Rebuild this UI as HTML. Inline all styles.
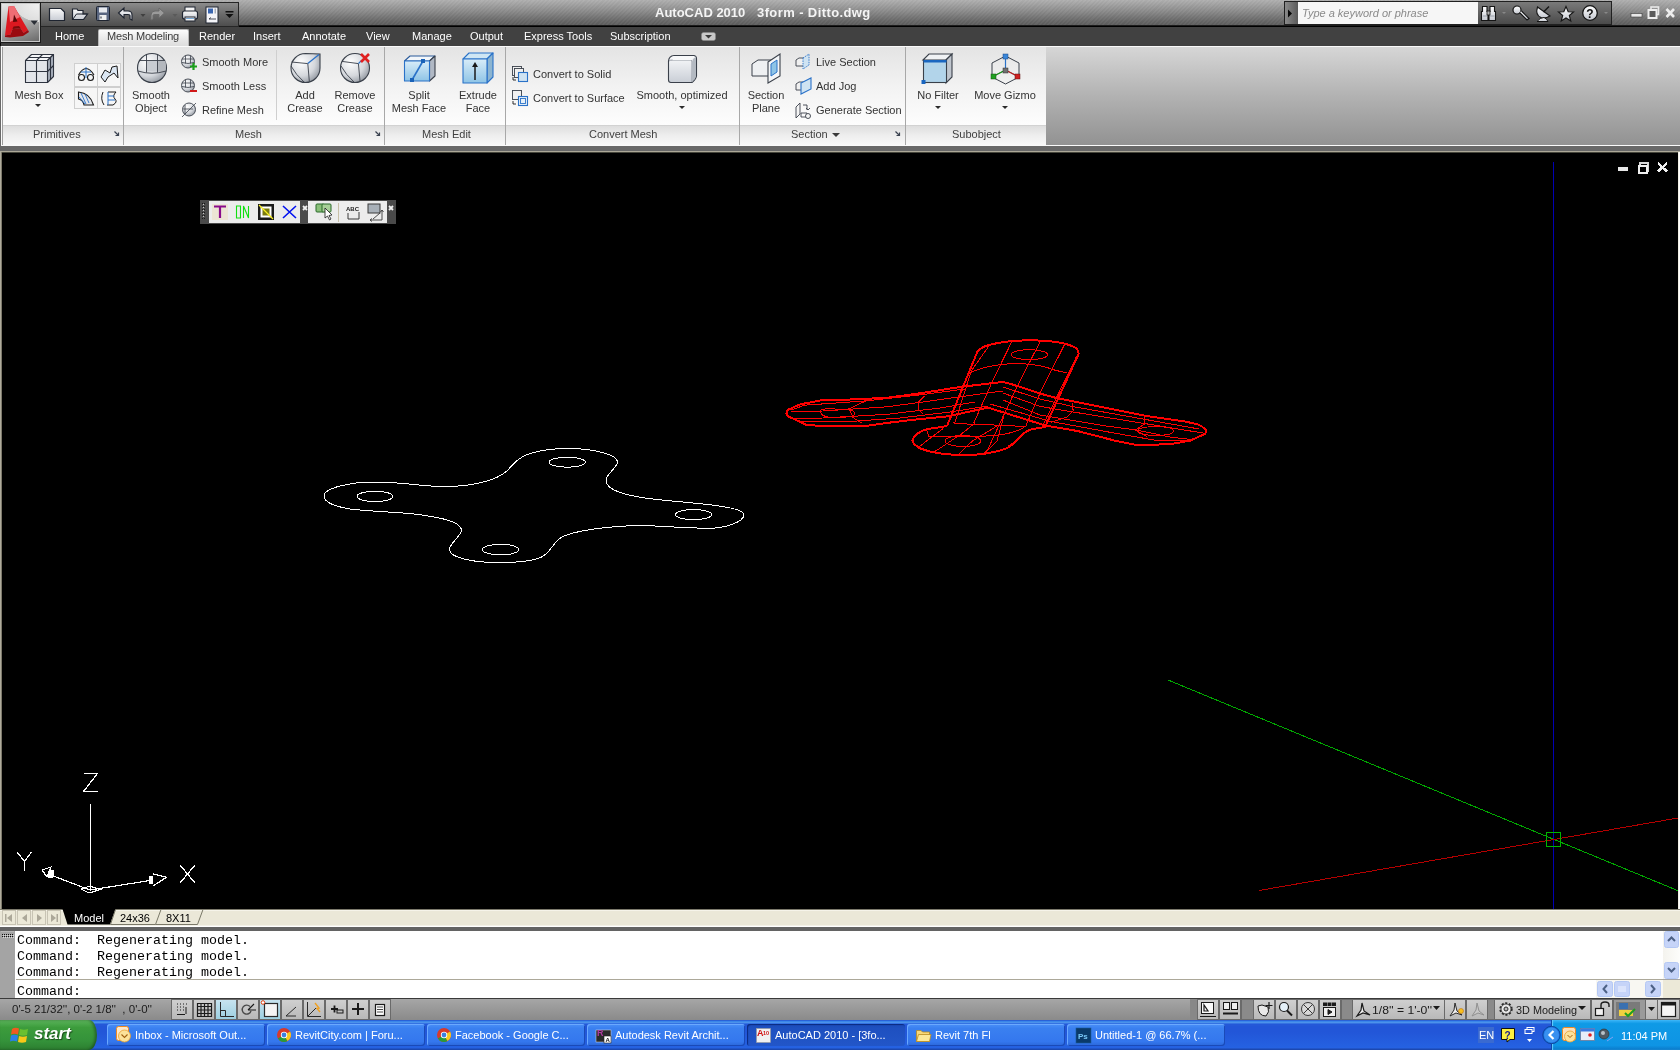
<!DOCTYPE html>
<html><head><meta charset="utf-8">
<style>
*{margin:0;padding:0;box-sizing:border-box}
html,body{width:1680px;height:1050px;overflow:hidden;background:#000;font-family:"Liberation Sans",sans-serif;font-size:11px}
body{will-change:transform}
.a{position:absolute}
.tab{top:30px;color:#fff;font-size:11px;white-space:nowrap}
.sep{top:47px;width:1px;height:98px;background:#a8a8a8}
.isep{width:1px;height:70px;background:#cfcfcf}
.pt{top:128px;color:#404040;font-size:11px;white-space:nowrap}
.lbl{color:#333;font-size:11px;white-space:nowrap;text-align:center;line-height:13px}
.sl{color:#333;font-size:11px;white-space:nowrap}
.cl{left:17px;font-family:"Liberation Mono",monospace;font-size:13.33px;color:#000;white-space:pre}
.tb{top:1024px;width:158px;height:22px;background:linear-gradient(#4a90f8,#3a80f0 20%,#3477ee 80%,#2a66d8);border-radius:3px;color:#fff;font-size:11px;padding:5px 0 0 28px;white-space:nowrap;box-shadow:inset 1px 1px 0 #6aa8ff,inset -1px -1px 0 #1a4ab8}
.tb.act{background:linear-gradient(#1a4ab8,#1e50c0 20%,#2256c8);box-shadow:inset 1px 1px 1px #0a2a80}
</style></head><body>
<!-- TITLE BAR -->
<div class="a" style="left:0;top:0;width:1680px;height:26px;background:linear-gradient(#b0b0b0,#8e8e8e 40%,#686868 80%,#5a5a5a)"></div>
<div class="a" style="left:0;top:0;width:1680px;height:26px;background:repeating-linear-gradient(-45deg,rgba(255,255,255,0.03) 0 1.5px,rgba(0,0,0,0.02) 1.5px 3px)"></div>
<div class="a" style="left:0;top:25px;width:1680px;height:1px;background:#1c1c1c"></div><div class="a" style="left:0;top:26px;width:1680px;height:1px;background:#000"></div>
<div class="a" style="left:655px;top:5px;color:#f4f4f4;font-weight:bold;font-size:13px;white-space:pre">AutoCAD 2010</div><div class="a" style="left:757px;top:5px;color:#f4f4f4;font-weight:bold;font-size:13px;letter-spacing:0.4px;white-space:pre">3form - Ditto.dwg</div>
<!-- QAT -->
<div class="a" style="left:40px;top:2px;width:199px;height:25px;background:linear-gradient(#8c8c8c,#6a6a6a 50%,#4e4e4e);border:1px solid #262626;border-left:none"></div>
<svg class="a" style="left:40px;top:2px" width="200" height="25" viewBox="0 0 200 25">
  <defs><linearGradient id="qg" x1="0" y1="0" x2="0" y2="1"><stop offset="0" stop-color="#fafafa"/><stop offset="1" stop-color="#c8ccd4"/></linearGradient></defs>
  <!-- new -->
  <path d="M9.5,6.5 H21 L24.5,10 V18.5 H9.5 Z" fill="url(#qg)" stroke="#1e2430" stroke-width="1.2"/>
  <!-- open -->
  <path d="M32.5,7 H37 L38,8.5 H43 V12 H47.5 L43.5,17.5 H32.5 Z" fill="url(#qg)" stroke="#1e2430" stroke-width="1.2"/>
  <path d="M33,17 L36.5,12 H47.5" fill="none" stroke="#1e2430" stroke-width="1"/>
  <!-- save -->
  <rect x="56.5" y="4.5" width="13" height="14" rx="1" fill="#5a6680" stroke="#1e2430" stroke-width="1"/>
  <rect x="59" y="5.5" width="8" height="5" fill="#e8eaee"/>
  <rect x="59.5" y="13" width="7" height="5" fill="#f0f0f0"/>
  <rect x="60.5" y="14.5" width="1" height="2" fill="#1e2430"/>
  <!-- undo -->
  <path d="M78.5,11 L84,6 V9 H88 Q92,9 92,13 V18 L90,17 V13.5 Q90,12.5 88,12.5 H84 V16 Z" fill="url(#qg)" stroke="#1e2430" stroke-width="1.1"/>
  <path d="M100.5,12 H105.5 L103,15 Z" fill="#404040"/>
  <!-- redo -->
  <path d="M124.5,11 L119,6 V9 H115 Q111,9 111,13 V18 L113,17 V13.5 Q113,12.5 115,12.5 H119 V16 Z" fill="#9a9a9a" stroke="#6a6a6a" stroke-width="1"/>
  <path d="M132.5,12 H137.5 L135,15 Z" fill="#5a5a5a"/>
  <!-- print -->
  <rect x="145" y="5" width="10" height="5" fill="#f4f4f4" stroke="#1e2430"/>
  <rect x="142.5" y="9" width="15" height="8" rx="2" fill="url(#qg)" stroke="#1e2430" stroke-width="1.2"/>
  <rect x="145" y="15" width="10" height="4" fill="#f4f4f4" stroke="#1e2430"/>
  <rect x="146" y="16" width="8" height="1" fill="#7aaad8"/>
  <!-- publish -->
  <rect x="166" y="5" width="12" height="16" fill="#f4f4f8" stroke="#1e2430" stroke-width="1"/>
  <rect x="168" y="6.5" width="5" height="5" fill="#3a66b0"/>
  <rect x="174.5" y="6.5" width="1.5" height="5" fill="#a8b0bc"/>
  <path d="M169,17 H176 M169,17 L171,15.5" stroke="#1e2430" stroke-width="0.8" fill="none"/>
  <!-- dropdown -->
  <rect x="185.5" y="9" width="8" height="1.5" fill="#101010"/>
  <path d="M185.5,12 H193.5 L189.5,16 Z" fill="#101010"/>
</svg>
<!-- search -->
<div class="a" style="left:1284px;top:1px;width:328px;height:24px;background:linear-gradient(#7a7a7a,#4a4a4a);border:1px solid #202020"></div>
<div class="a" style="left:1285px;top:2px;width:13px;height:22px;background:linear-gradient(90deg,#8a8a8a,#5a5a5a)"></div>
<svg class="a" style="left:1287px;top:9px" width="6" height="9"><path d="M1,0.5 L5,4.5 L1,8.5 Z" fill="#080808"/></svg>
<div class="a" style="left:1298px;top:2px;width:180px;height:22px;background:#f6f6f6"></div>
<div class="a" style="left:1302px;top:7px;color:#8a8a8a;font-style:italic;font-size:11px;white-space:nowrap">Type a keyword or phrase</div>
<svg class="a" style="left:1478px;top:2px" width="134" height="22" viewBox="0 0 134 22">
  <defs><linearGradient id="sg" x1="0" y1="0" x2="0" y2="1"><stop offset="0" stop-color="#ffffff"/><stop offset="1" stop-color="#c4c8d0"/></linearGradient></defs>
  <!-- binoculars -->
  <path d="M4.5,4.5 H9 V9.5 H10 V18.5 H3.5 V9.5 H4.5 Z M12,4.5 H16.5 V9.5 H17.5 V18.5 H11 V9.5 H12 Z" fill="url(#sg)" stroke="#151515" stroke-width="1.1"/>
  <rect x="9" y="9" width="3" height="4" fill="#b0b0b0" stroke="#151515" stroke-width="0.8"/>
  <path d="M5,14 H9 M12,14 H16.5" stroke="#9aa0aa" stroke-width="1"/>
  <path d="M24,10 H28 L26,12 Z" fill="#888"/>
  <!-- key -->
  <circle cx="39" cy="8" r="4" fill="url(#sg)" stroke="#151515" stroke-width="1.2"/>
  <path d="M41.5,10.5 L49,18 L51,16.5 L43.5,9" fill="url(#sg)" stroke="#151515" stroke-width="1.2"/>
  <!-- satellite -->
  <path d="M59.5,5 Q57,13 63,15.5 Q67,17 72,14 Z" fill="url(#sg)" stroke="#151515" stroke-width="1.1"/>
  <path d="M65.5,10 L71,4.5" stroke="#151515" stroke-width="1.4"/>
  <path d="M59,19.5 Q62,15.5 66,15.5 Q69,17 70,19.5 Z" fill="url(#sg)" stroke="#151515" stroke-width="1"/>
  <!-- star -->
  <path d="M88,4.5 L90.2,9.8 L95.5,10 L91.3,13.5 L92.8,19 L88,16 L83.2,19 L84.7,13.5 L80.5,10 L85.8,9.8 Z" fill="url(#sg)" stroke="#151515" stroke-width="1.1"/>
  <!-- help -->
  <circle cx="112" cy="11" r="7.3" fill="url(#sg)" stroke="#151515" stroke-width="1.3"/>
  <text x="112" y="15.5" text-anchor="middle" font-family="Liberation Sans" font-weight="bold" font-size="12" fill="#101010">?</text>
  <path d="M126,10 H130 L128,12 Z" fill="#888"/>
</svg>
<!-- window controls -->
<svg class="a" style="left:1628px;top:4px" width="52" height="18" viewBox="0 0 52 18">
  <rect x="3" y="9.5" width="11" height="3.5" fill="#e8e8e8" stroke="#3a3a3a" stroke-width="0.6"/>
  <rect x="23" y="3" width="7.5" height="7.5" fill="none" stroke="#e8e8e8" stroke-width="1.6"/>
  <rect x="20.5" y="6" width="8" height="8" fill="#5a5a5a" stroke="#eeeeee" stroke-width="2"/>
  <path d="M38.5,5 L46,13 M46,5 L38.5,13" stroke="#eeeeee" stroke-width="2.6"/>
</svg>
<!-- TABS -->
<div class="a" style="left:0;top:27px;width:1680px;height:19px;background:#414141"></div>
<div class="a" style="left:0;top:26px;width:1px;height:20px;background:#0a0a0a"></div>
<div class="a" style="left:98px;top:29px;width:91px;height:18px;background:linear-gradient(#fbfbfb,#e6e6e6 60%,#dcdcdc);border:1px solid #b8b8b8;border-bottom:none;border-radius:2px 2px 0 0"></div>
<div class="a tab" style="left:55px">Home</div>
<div class="a tab" style="left:107px;color:#3a3a3a;letter-spacing:-0.2px">Mesh Modeling</div>
<div class="a tab" style="left:199px">Render</div>
<div class="a tab" style="left:253px">Insert</div>
<div class="a tab" style="left:302px">Annotate</div>
<div class="a tab" style="left:366px">View</div>
<div class="a tab" style="left:412px">Manage</div>
<div class="a tab" style="left:470px">Output</div>
<div class="a tab" style="left:524px">Express Tools</div>
<div class="a tab" style="left:610px">Subscription</div>
<svg class="a" style="left:701px;top:32px" width="15" height="10"><rect x="0.5" y="0.5" width="14" height="8" rx="2" fill="#c8c8c8" stroke="#888" stroke-width="0.5"/><path d="M4,3 H11 L7.5,6.5 Z" fill="#3a3a3a"/></svg>
<!-- app button -->
<div class="a" style="left:0;top:2px;width:41px;height:41px;background:#1a1a1a"></div>
<div class="a" style="left:1px;top:3px;width:39px;height:39px;background:radial-gradient(ellipse 60px 40px at 40px 0px,#f2f2f2 0,#dedede 45%,transparent 46%),linear-gradient(160deg,#e8e8e8,#b0b0b0 50%,#6a6a6a);border:1px solid #c8c8c8"></div>
<svg class="a" style="left:1px;top:3px" width="39" height="39" viewBox="0 0 39 39">
  <path d="M7.5,3.5 L13,3 L27,27 L22.5,30 L19.5,25 L11.5,26 L9.5,31.5 L4,32.5 Z" fill="#dc1820"/>
  <path d="M7.5,3.5 L13,3 L19,14 L9,19 Z" fill="#f27c84" opacity="0.85"/>
  <path d="M13,11.5 L16.5,18.5 L12,19 Z" fill="#5a0808"/>
  <path d="M4,32.5 L9.5,31.5 L11.5,26 L19.5,25 L22.5,30 L27,27 L28,29 L22,33 L9,34.5 L4,34 Z" fill="#9a0a10"/>
  <path d="M11.5,26 L19.5,25 L18,23 L12.5,23.5 Z" fill="#7a0a0a"/>
  <polygon points="29.5,17.5 37,17.5 33.3,22" fill="#2a2e36"/>
</svg>
<!-- RIBBON -->
<div class="a" style="left:0;top:46px;width:1680px;height:100px;background:linear-gradient(#d6d6d6,#b2b2b2 50%,#929292);border-top:1px solid #fafafa;border-bottom:1px solid #fafafa"></div>
<div class="a" style="left:0;top:46px;width:1px;height:100px;background:#6a6a6a"></div>
<div class="a" style="left:1px;top:46px;width:1px;height:100px;background:#fafafa"></div>
<div class="a" style="left:2px;top:47px;width:1044px;height:78px;background:linear-gradient(#e4e4e4,#f2f2f2 50%,#fdfdfd)"></div>
<div class="a" style="left:2px;top:125px;width:1044px;height:20px;background:linear-gradient(#dedede,#eeeeee 50%,#f8f8f8);border-top:1px solid #d2d2d2"></div>
<div class="a" style="left:2px;top:47px;width:1px;height:98px;background:#9c9c9c"></div>
<div class="a sep" style="left:123px"></div>
<div class="a sep" style="left:384px"></div>
<div class="a sep" style="left:505px"></div>
<div class="a sep" style="left:739px"></div>
<div class="a sep" style="left:905px"></div>
<div class="a isep" style="left:276px;top:50px"></div>
<div class="a pt" style="left:33px">Primitives</div>
<div class="a pt" style="left:235px">Mesh</div>
<div class="a pt" style="left:422px">Mesh Edit</div>
<div class="a pt" style="left:589px">Convert Mesh</div>
<div class="a pt" style="left:791px">Section</div>
<div class="a pt" style="left:952px">Subobject</div>
<svg class="a" style="left:0;top:125px" width="1046" height="20" viewBox="0 0 1046 20">
  <g stroke="#3a4250" stroke-width="1.2" fill="none">
   <path d="M114.5,6.5 L118.5,10.5 M118.5,7.5 V10.5 H115.5"/>
   <path d="M375.5,6.5 L379.5,10.5 M379.5,7.5 V10.5 H376.5"/>
   <path d="M895.5,6.5 L899.5,10.5 M899.5,7.5 V10.5 H896.5"/>
  </g>
  <path d="M832,8 H840 L836,12 Z" fill="#3a3a3a"/>
</svg>
<!-- labels -->
<div class="a lbl" style="left:10px;top:89px;width:58px">Mesh Box</div>
<div class="a lbl" style="left:125px;top:89px;width:52px">Smooth<br>Object</div>
<div class="a sl" style="left:202px;top:56px">Smooth More</div>
<div class="a sl" style="left:202px;top:80px">Smooth Less</div>
<div class="a sl" style="left:202px;top:104px">Refine Mesh</div>
<div class="a lbl" style="left:280px;top:89px;width:50px">Add<br>Crease</div>
<div class="a lbl" style="left:327px;top:89px;width:56px">Remove<br>Crease</div>
<div class="a lbl" style="left:386px;top:89px;width:66px">Split<br>Mesh Face</div>
<div class="a lbl" style="left:450px;top:89px;width:56px">Extrude<br>Face</div>
<div class="a sl" style="left:533px;top:68px">Convert to Solid</div>
<div class="a sl" style="left:533px;top:92px">Convert to Surface</div>
<div class="a lbl" style="left:628px;top:89px;width:108px">Smooth, optimized</div>
<div class="a lbl" style="left:740px;top:89px;width:52px">Section<br>Plane</div>
<div class="a sl" style="left:816px;top:56px">Live Section</div>
<div class="a sl" style="left:816px;top:80px">Add Jog</div>
<div class="a sl" style="left:816px;top:104px">Generate Section</div>
<div class="a lbl" style="left:908px;top:89px;width:60px">No Filter</div>
<div class="a lbl" style="left:968px;top:89px;width:74px">Move Gizmo</div>
<!-- icons -->
<svg class="a" style="left:0;top:46px" width="1046" height="80" viewBox="0 46 1046 80">
  <defs>
    <linearGradient id="gw" x1="0" y1="0" x2="0" y2="1"><stop offset="0" stop-color="#fafbfc"/><stop offset="1" stop-color="#c9ced6"/></linearGradient>
    <linearGradient id="gs" x1="0" y1="0" x2="1" y2="1"><stop offset="0" stop-color="#ffffff"/><stop offset="0.6" stop-color="#d8dbe0"/><stop offset="1" stop-color="#8e949e"/></linearGradient>
    <linearGradient id="gb" x1="0" y1="0" x2="0" y2="1"><stop offset="0" stop-color="#d8ecf8"/><stop offset="1" stop-color="#8ec4e6"/></linearGradient>
    <radialGradient id="rs" cx="0.35" cy="0.3" r="0.8"><stop offset="0" stop-color="#ffffff"/><stop offset="0.6" stop-color="#d4d7dc"/><stop offset="1" stop-color="#8a9099"/></radialGradient>
  </defs>
  <!-- mesh box -->
  <g stroke="#2e3440" stroke-width="1.1" stroke-linejoin="round">
    <path d="M25.5,60.5 L31.5,54.5 H53.5 L47.5,60.5 Z" fill="#f4f5f7"/>
    <path d="M47.5,60.5 L53.5,54.5 V76.5 L47.5,82.5 Z" fill="#a8b0bc"/>
    <rect x="25.5" y="60.5" width="22" height="22" fill="#e2e5ea"/>
    <path d="M36.5,60.5 V82.5 M25.5,71.5 H47.5 M50.5,57.5 V79.5 M47.5,71.5 L53.5,65.5 M42.5,54.5 L36.5,60.5 M28.5,57.5 H50.5" fill="none"/>
  </g>
  <path d="M35,104 H41 L38,107 Z" fill="#2a2a2a"/>
  <!-- small grid -->
  <g fill="#f6f6f6" stroke="#cfcfcf"><rect x="74.5" y="63.5" width="23" height="23"/><rect x="97.5" y="63.5" width="23" height="23"/><rect x="74.5" y="87.5" width="23" height="21"/><rect x="97.5" y="87.5" width="23" height="21"/></g>
  <g stroke="#1a1a1a" stroke-width="1.1" fill="none">
    <path d="M78.5,75 Q86,62 94,75"/><circle cx="81.5" cy="77.5" r="3"/><circle cx="90.5" cy="77.5" r="3"/>
  </g>
  <path d="M86,67 V78 M81,72 H91" stroke="#2a72c8" stroke-width="1"/>
  <path d="M101,77 L105,70 L110,73 L112,67 L117,66 L118,78 L114,73 L108,77 L105,82 Z" fill="#dbe6f2" stroke="#1a1a1a" stroke-width="1"/>
  <path d="M78.5,92 Q90,93 93.5,105 H84 Q83,100 78.5,99 Z" fill="#e4e6ea" stroke="#1a1a1a" stroke-width="1.1"/>
  <path d="M81,93 L86,104 M85,94 L89,103 M79,97 L85,104" stroke="#2a72c8" stroke-width="0.9"/>
  <path d="M103,92 Q100,99 104,105 M108,92 H116 Q112,96 115,99 Q118,102 113,105 H107" fill="none" stroke="#1a1a1a" stroke-width="1"/>
  <path d="M108,92 V105 M108,96 H114 M108,100 H115" stroke="#2a72c8" stroke-width="1"/>
  <!-- smooth object sphere -->
  <circle cx="152" cy="68" r="14.5" fill="url(#rs)" stroke="#3a404a" stroke-width="1.1"/>
  <rect x="146.5" y="60.5" width="11" height="11" fill="#c8ccd2"/>
  <path d="M157.5,60.5 H165.5 Q166.5,66 165.5,71 Q161,72 157.5,71.5 Z" fill="#b4b8be"/>
  <path d="M138,71 Q152,75.5 166,71 M139,60.5 H165 M146.5,54.5 V72.5 M157.5,54.5 V72.5" fill="none" stroke="#3a404a" stroke-width="0.9"/>
  <!-- smooth more/less/refine -->
  <g transform="translate(181,54)">
    <circle cx="7" cy="7.5" r="6.5" fill="url(#rs)" stroke="#3a404a" stroke-width="0.9"/>
    <path d="M1,5 H13 M1,8.5 Q7,10.5 13,8.5 M4.5,1.5 V9.5 M9.5,1.5 V9.5" stroke="#3a404a" stroke-width="0.8" fill="none"/>
    <path d="M12.5,9 V16 M9,12.5 H16" stroke="#1aa01a" stroke-width="2.2"/>
  </g>
  <g transform="translate(181,78)">
    <circle cx="7" cy="7.5" r="6.5" fill="url(#rs)" stroke="#3a404a" stroke-width="0.9"/>
    <path d="M1,5 H13 M1,8.5 Q7,10.5 13,8.5 M4.5,1.5 V9.5 M9.5,1.5 V9.5" stroke="#3a404a" stroke-width="0.8" fill="none"/>
    <path d="M9,13 H16" stroke="#d01818" stroke-width="2"/>
  </g>
  <g transform="translate(181,102)">
    <circle cx="8" cy="7.5" r="6.5" fill="url(#rs)" stroke="#3a404a" stroke-width="0.9"/>
    <path d="M1,15 L15,1 M4,3 V12 M2,7 H12" stroke="#3a404a" stroke-width="0.8" fill="none"/>
  </g>
  <!-- add crease -->
  <path d="M320,54 V68 A14.5,14.5 0 1 1 305.5,53.5 Z" fill="url(#rs)" stroke="#3a404a" stroke-width="1.1"/>
  <path d="M291.5,62 L307.8,63.6 L309.3,81 M291,66 Q296,75 304,82" fill="none" stroke="#3a404a" stroke-width="0.9"/>
  <path d="M307.8,63.6 L319,54.5" stroke="#2a72c8" stroke-width="1.3"/>
  <!-- remove crease -->
  <circle cx="355" cy="68" r="14.5" fill="url(#rs)" stroke="#3a404a" stroke-width="1.1"/>
  <path d="M342,61.4 L358.4,63.6 L360,81 M341,66 Q346,75 354,82" fill="none" stroke="#3a404a" stroke-width="0.9"/>
  <path d="M358.4,63.6 L361,61" stroke="#2a72c8" stroke-width="1.2"/>
  <path d="M361,54 L369,62 M369,54 L361,62" stroke="#e02020" stroke-width="2.6"/>
  <!-- split mesh face -->
  <g stroke="#2a5a9a" stroke-width="1.1" stroke-linejoin="round">
    <path d="M404.5,61 L410,56 H435 L429.5,61 Z" fill="#f2f6fa"/>
    <path d="M429.5,61 L435,56 V76 L429.5,81 Z" fill="#b0b8c4" stroke="#3a404a"/>
    <rect x="404.5" y="61" width="25" height="20" fill="url(#gb)" stroke="#2a72c8"/>
  </g>
  <path d="M412,80 L423,61" stroke="#2a72c8" stroke-width="1.6"/>
  <rect x="410" y="78" width="4" height="4" fill="#1a62b8"/><rect x="421" y="59" width="4" height="4" fill="#1a62b8"/>
  <!-- extrude face -->
  <g stroke-linejoin="round">
    <path d="M463,59 L469,53 H493 L487,59 Z" fill="#cfe6f4" stroke="#2a72c8" stroke-width="1.1"/>
    <path d="M487,59 L493,53 V77 L487,83 Z" fill="#8cb4d0" stroke="#2a72c8" stroke-width="1.1"/>
    <rect x="463" y="59" width="24" height="24" fill="url(#gb)" stroke="#2a72c8" stroke-width="1.1"/>
  </g>
  <path d="M475,80 V66" stroke="#1a1a1a" stroke-width="1.5"/><path d="M472,67 L475,62 L478,67 Z" fill="#1a1a1a"/>
  <!-- convert icons -->
  <g transform="translate(512,66)">
    <rect x="0.5" y="0.5" width="9" height="9" fill="#f0f0f0" stroke="#3a404a" stroke-width="0.9"/>
    <rect x="2.5" y="2.5" width="9" height="9" fill="#f0f0f0" stroke="#3a404a" stroke-width="0.9"/>
    <rect x="6.5" y="6.5" width="9" height="9" fill="#cfe3f2" stroke="#2a72c8" stroke-width="1.1"/>
    <path d="M1,11 V14 H4" fill="none" stroke="#1a1a1a" stroke-width="0.9"/>
  </g>
  <g transform="translate(512,90)">
    <rect x="0.5" y="0.5" width="9" height="9" fill="#f0f0f0" stroke="#3a404a" stroke-width="0.9"/>
    <rect x="6.5" y="6.5" width="9" height="9" fill="#e6f0f8" stroke="#2a72c8" stroke-width="1.1"/>
    <rect x="8.5" y="8.5" width="5" height="5" fill="none" stroke="#2a72c8" stroke-width="0.9"/>
    <path d="M1,11 V14 H4" fill="none" stroke="#1a1a1a" stroke-width="0.9"/>
  </g>
  <!-- smooth optimized cube -->
  <path d="M668.5,61 Q669,56 674,55.5 H694 Q696.5,56 696.5,58.5 V76 Q696,79.5 692,82.5 H671 Q668.5,82.5 668.5,80 Z" fill="url(#gw)" stroke="#3a404a" stroke-width="1.1"/>
  <path d="M669,61 Q670,60 673,60 H691 Q692,60.5 692,62 V82" fill="none" stroke="#8a909a" stroke-width="0.9"/>
  <path d="M692,62 Q693,58 696,56.5 V76 Q695.5,79.5 692,82 Z" fill="#b4bac2"/>
  <path d="M673,60 Q670,57 674,56 H694 Q692,59 691,60 Z" fill="#f8f9fa"/>
  <path d="M679,106 H685 L682,109 Z" fill="#2a2a2a"/>
  <!-- section plane -->
  <path d="M752,64 L758,60 H774 V76 H752 Z" fill="#eef0f2" stroke="#3a404a" stroke-width="1"/>
  <path d="M768,62 L780,54 V76 L768,83 Z" fill="#f4f6f8" stroke="#3a404a" stroke-width="1.1"/>
  <path d="M771,64 L777,60 V72 L771,76 Z" fill="#8ec4e6" stroke="#2a72c8" stroke-width="1"/>
  <!-- live section / add jog / generate -->
  <g transform="translate(795,54)" stroke-width="0.9">
    <path d="M1,6 L4,4 H10 V12 H1 Z" fill="#f0f0f0" stroke="#3a404a"/>
    <path d="M8,4 L14,0 V11 L8,15 Z" fill="#cfe3f2" stroke="#2a72c8" stroke-dasharray="1.5,1"/>
  </g>
  <g transform="translate(795,78)" stroke-width="0.9">
    <path d="M1,6 L4,4 H10 V12 H1 Z" fill="#f0f0f0" stroke="#3a404a"/>
    <path d="M6,5 L10,3 L16,0 V11 L10,14 L6,16 Z" fill="#cfe3f2" stroke="#2a72c8" stroke-width="1.1"/>
  </g>
  <g transform="translate(795,102)" stroke-width="0.9" fill="none" stroke="#3a404a">
    <path d="M1,5 L5,1 V12 L1,16 Z" fill="#f6f6f6"/>
    <path d="M6,11 H12 V15 H6 Z M8,3 H12 V8" />
    <circle cx="13" cy="14" r="2.5" fill="#f6f6f6"/>
    <path d="M11,6 L13,8 L15,6" />
  </g>
  <!-- no filter -->
  <path d="M923,60 L929,54 H952 L946,60 Z" fill="#f0f2f4" stroke="#3a404a" stroke-width="1.1"/>
  <path d="M946,60 L952,54 V77 L946,83 Z" fill="#c0c6ce" stroke="#3a404a" stroke-width="1.1"/>
  <rect x="923.5" y="60.5" width="23" height="22" fill="#b2d4ea" stroke="#3a404a" stroke-width="1.1"/>
  <rect x="923.5" y="60" width="23" height="2.5" fill="#1a66c0"/>
  <rect x="921.5" y="80" width="4" height="4" fill="#1a66c0"/>
  <path d="M935,106 H941 L938,109 Z" fill="#2a2a2a"/>
  <!-- move gizmo -->
  <path d="M1005.5,56 L1019,63 V77 L1005.5,84 L992,77 V63 Z" fill="none" stroke="#3a404a" stroke-width="1"/>
  <path d="M1005.5,57 V70 M1005.5,70 L994,76 M1005.5,70 L1017,76" fill="none" stroke="#3a404a" stroke-width="0.9"/>
  <path d="M1005.5,70 L994,76" stroke="#1a9a1a" stroke-width="1.2"/>
  <path d="M1005.5,70 L1017,76" stroke="#c02020" stroke-width="1.2"/>
  <path d="M1005.5,57 V70" stroke="#2a72c8" stroke-width="1.2"/>
  <rect x="1003" y="54" width="5" height="5" fill="#3a86d8" stroke="#1a4a88" stroke-width="0.5"/>
  <rect x="1003" y="68" width="5" height="5" fill="#707070" stroke="#303030" stroke-width="0.5"/>
  <rect x="991" y="74" width="5" height="5" fill="#20a020" stroke="#105010" stroke-width="0.5"/>
  <rect x="1015" y="74" width="5" height="5" fill="#d02020" stroke="#601010" stroke-width="0.5"/>
  <path d="M1002,106 H1008 L1005,109 Z" fill="#2a2a2a"/>
</svg>
<!-- strip below ribbon -->
<div class="a" style="left:0;top:146px;width:1680px;height:5px;background:#686868"></div>
<div class="a" style="left:0;top:151px;width:1680px;height:1px;background:#aca898"></div>
<div class="a" style="left:0;top:152px;width:1680px;height:1px;background:#46463c"></div>
<!-- VIEWPORT -->
<div class="a" style="left:2px;top:153px;width:1676px;height:756px;background:#000"></div>
<svg class="a" style="left:0;top:152px" width="1680" height="757" viewBox="0 152 1680 757" shape-rendering="crispEdges">
  <!-- axes -->
  <line x1="1553.5" y1="162" x2="1553.5" y2="909" stroke="#0000b4" stroke-width="1"/>
  <line x1="1168" y1="680" x2="1680" y2="891.5" stroke="#00a800" stroke-width="1"/>
  <line x1="1259" y1="890.5" x2="1678" y2="818" stroke="#b40000" stroke-width="1"/>
  <rect x="1546.5" y="832.5" width="14" height="14" fill="none" stroke="#00b400" stroke-width="1"/>
  <!-- viewport controls -->
  <rect x="1618" y="167" width="10" height="4" fill="#e8e8e8"/>
  <rect x="1640" y="163" width="8" height="8" fill="none" stroke="#d8d8d8" stroke-width="1.5"/>
  <rect x="1638.5" y="165.5" width="8" height="7" fill="#000" stroke="#f0f0f0" stroke-width="2"/>
  <path d="M1658,163 L1667,171.5 M1667,163 L1658,171.5" stroke="#f0f0f0" stroke-width="2.4"/>
  <!-- white shape -->
  <g fill="none" stroke="#ffffff" stroke-width="1">
    <path d="M324,496 C324,488 350,482 375,482 C400,482 425,486.5 442,486.5 C470,487 497,481 508,470 C514,463 519,457 530,453.5 C543,449.5 556,448.5 568,448.5 C595,448.5 617.5,455 617.5,462 C617.5,467 607,474 606.3,479 C604,490 625,496 657,499.5 C690,503 744,506 744,514.6 C744,522 725,528.3 709,528.3 C680,528 660,525.6 640.5,525.6 C605,526 574,531 562,537 C552,543 551,553 540,557.8 C530,561.5 515,562.6 499,562.6 C470,562.6 449.5,557 449.5,549.6 C449.5,543 461.4,536 461.4,530.4 C461.4,520 430,516 414,514 C395,512 365,511 350,509 C332,506 324,502 324,496 Z"/>
    <ellipse cx="375" cy="496.4" rx="18" ry="5.2"/>
    <ellipse cx="500.5" cy="549.6" rx="18.2" ry="5.3"/>
    <ellipse cx="567.2" cy="462.2" rx="18.2" ry="5"/>
    <ellipse cx="693.6" cy="514.6" rx="18.2" ry="5"/>
  </g>
  <!-- red wireframe -->
  <g fill="none" stroke="#ff0000" stroke-width="1" stroke-linejoin="round">
    <!-- left arm -->
    <path d="M786.4,413.2 C787,410 789,408.5 790.7,408.9 C795,406 798,405 801.4,404.1 L820.7,400.4 L857.2,399.3 L887.2,397.7 L919.3,393.4 L960,387 L1002,382" stroke-width="2"/>
    <path d="M786.4,413.2 C787,416 789,417 790.7,417.5 L806.8,425 L822.9,426 L865.7,426 L887.2,422.9 L914,419.7 L947.2,416.4" stroke-width="2"/>
    <path d="M790.7,412 L822.9,411 L887,406.8 L930,401 L980,394 L1003,391"/>
    <path d="M791,410 L804.6,405.2 L865.7,400.9 L919.3,395 L965,389"/>
    <path d="M792,419 L822.9,418 L887.2,414.3 L940,408 L975,402"/>
    <path d="M800,422 L850,421.5 L900,418 L950,412 L988,406"/>
    <path d="M821,413 C818,409 825,408.5 835,409 C845,409 855,410 855,413.5 C855,417 845,417.5 835,417.5 C825,417.5 822,416 821,413 Z"/>
    <path d="M848.6,409 L865.7,401 M852.9,417.5 L861.4,422.9 M848.6,409 C851,412 852,415 852.9,417.5"/>
    <path d="M924.7,396 L918.2,402.5 L918.2,409 L923.6,414.3"/>
    <!-- center bar section -->
    <path d="M1002,382 C1010,383 1020,387 1040,393.6 L1056,397.9 L1104.3,407.5 L1147.1,416.1 L1184.6,421.4 L1198.6,424.6 C1203,427 1206,429 1206,431.1 C1206,433 1205,434 1204,434.3 L1190,440.7 L1171.8,443.9 L1138.6,445.5 L1115,440.7 L1077.5,431 L1046,425.7" stroke-width="2"/>
    <path d="M947.2,416.4 L988,407.6 L1046,425.7" stroke-width="2"/>
    <path d="M1003,387 L1040,399 L1072,406.4 L1198.6,428.9"/>
    <path d="M1003,393 L1040,406.4 L1072,411.8 L1145,423.6 L1204,433.2"/>
    <path d="M1003,400 L1040,415 L1104,425.7 L1136.4,430 L1170,437 L1195,440"/>
    <path d="M990,404 L1050.7,421.4 L1115,433.2 L1157.9,440.7 L1190,440"/>
    <path d="M1138,431 C1138,428 1145,426.7 1155.7,426.7 C1166,426.7 1173.4,428 1173.4,431 C1173.4,434 1166,435.3 1155.7,435.3 C1145,435.3 1138,434 1138,431 Z"/>
    <path d="M1144,417.1 L1145,423.6 L1135.4,430 L1147,436.4"/>
    <path d="M1072,403.2 L1073.2,410.7 L1066.8,417.1 L1050.7,422.5"/>
    <!-- fin -->
    <path d="M947,426 L977.4,351.7 C980,348 985,346 989.3,345 C1000,342 1010,340.4 1030,340.4 C1050,340.4 1065,343 1072.6,346.3 C1077,348 1079,350 1078.6,354 L1045.2,426.7" stroke-width="2"/>
    <path d="M988.7,346.3 L971.4,370.7 L954.8,423"/>
    <path d="M1076,357.6 L1042.9,425.5"/>
    <path d="M970.2,373 C975,370 990,365 1007,364 C1020,363 1040,364 1052.4,369.5 L1066.7,373"/>
    <path d="M1011.9,341.5 L992.9,380.2 L973.8,423"/>
    <path d="M1040.5,341 L1017.9,385 L1000,423 L985.7,454"/>
    <path d="M1064.3,345 L1040.5,392 L1026,425.5"/>
    <ellipse cx="1029.3" cy="354.7" rx="18.3" ry="5"/>
    <!-- bottom lobe -->
    <path d="M947,426 C940,427.5 932,428 925.7,429.5 C920,431 913,436 912.4,441 C915,447 925,451 935,452.5 C945,454.5 955,455 965,455 C980,455 990,454 1005,449 C1012,446 1016,442 1020,437 C1025,431 1030,429 1040,428 L1046,426.5" stroke-width="2"/>
    <path d="M1008,446 C1014,443 1018,439 1023,434 C1028,430 1034,428 1046,427.5"/>
    <path d="M928,436 C940,437 960,436.2 981,436.2 C995,436.2 1010,435 1024,427.6"/>
    <path d="M953,422.9 C965,424 975,424.8 985.7,424.8 C1000,425 1015,426 1025.7,426.7"/>
    <path d="M926.7,430 L928.6,436.2 M918,447.6 L942.9,428.6 M934.3,451.9 L961,434.3 L975.2,422.9 M958,454.8 L972.4,441 L999,424.8 M983.8,453.8 L997,441 L1004.8,412.4"/>
    <ellipse cx="962.9" cy="441" rx="18" ry="5.5"/>
  </g>
  <!-- UCS icon -->
  <g fill="none" stroke="#ffffff" stroke-width="1.2">
    <path d="M83.5,773.5 H97.5 L83.5,791.5 H97.5"/>
    <line x1="90.5" y1="804" x2="90.5" y2="890"/>
    <path d="M17,852 L24.5,861.5 L31.5,852 M24.5,861.5 V870.5"/>
    <path d="M180,865 L195,883 M195,865 L180,883"/>
    <path d="M90,890 L52,875.5"/>
    <path d="M90,890 L150,880.5"/>
    <path d="M42,870 L51,867 L47,877 Z"/>
    <path d="M153,874 L166.5,877.3 L153,886"/>
    <path d="M81,889 L90,886 L100,889.5 L89,893 Z"/>
  </g>
  <rect x="48" y="870" width="6" height="8" rx="2" fill="#fff"/>
  <rect x="149" y="876" width="4" height="8" fill="#fff"/>
</svg>
<!-- floating toolbar -->
<div class="a" style="left:200px;top:200px;width:196px;height:24px;background:#4a4a4a"></div>
<div class="a" style="left:209px;top:201px;width:91px;height:22px;background:#ececec"></div>
<div class="a" style="left:308px;top:201px;width:79px;height:22px;background:#ececec"></div>
<svg class="a" style="left:200px;top:200px" width="196" height="24" viewBox="200 200 196 24">
  <g fill="#1a1a1a"><rect x="202" y="203" width="1" height="1"/><rect x="204" y="203" width="1" height="1"/><rect x="202" y="206" width="1" height="1"/><rect x="204" y="206" width="1" height="1"/><rect x="202" y="209" width="1" height="1"/><rect x="204" y="209" width="1" height="1"/><rect x="202" y="212" width="1" height="1"/><rect x="204" y="212" width="1" height="1"/><rect x="202" y="215" width="1" height="1"/><rect x="204" y="215" width="1" height="1"/><rect x="202" y="218" width="1" height="1"/><rect x="204" y="218" width="1" height="1"/></g>
  <g fill="#c8c8c8"><rect x="203" y="204" width="1" height="1"/><rect x="203" y="207" width="1" height="1"/><rect x="203" y="210" width="1" height="1"/><rect x="203" y="213" width="1" height="1"/><rect x="203" y="216" width="1" height="1"/></g>
  <rect x="212" y="204" width="16" height="16" fill="#ece4d4"/>
  <path d="M214,206.5 H226 M220,206.5 V218" stroke="#8a0a8a" stroke-width="2.2"/>
  <path d="M236.5,206 H240.5 V218 H236.5 Z M243.5,218 V206 L248.5,218 V206" fill="none" stroke="#10e010" stroke-width="1.1"/>
  <rect x="258" y="204" width="16" height="16" fill="#1a1a1a"/>
  <rect x="260.5" y="206.5" width="11" height="11" fill="#fff"/>
  <rect x="262.5" y="208.5" width="7" height="7" fill="#7a7a10"/>
  <path d="M259,205 L273,219" stroke="#f8f020" stroke-width="1.2"/>
  <path d="M283,206 L296,218 M296,206 L283,218" stroke="#0010f0" stroke-width="1.6"/>
  <path d="M303,206 L307,210 M307,206 L303,210" stroke="#f0f0f0" stroke-width="1.8"/>
  <path d="M389,206 L393,210 M393,206 L389,210" stroke="#f0f0f0" stroke-width="1.8"/>
  <rect x="316" y="204" width="8" height="8" rx="1" fill="#8ac07a" stroke="#2a6a2a" stroke-width="1"/>
  <rect x="322" y="204" width="9" height="8" rx="1" fill="#a8d098" stroke="#2a6a2a" stroke-width="1"/>
  <path d="M325,208 V218 L327.5,216 L329.5,220 L331,219 L329,215.5 L332,215 Z" fill="#fff" stroke="#1a1a1a" stroke-width="0.8"/>
  <line x1="338.5" y1="203" x2="338.5" y2="222" stroke="#c8c0a8"/>
  <text x="346" y="211" font-family="Liberation Sans" font-weight="bold" font-size="6" fill="#1a1a1a">ABC</text>
  <path d="M348,213 V219 H359 V212" fill="none" stroke="#3a3a3a" stroke-width="1"/>
  <rect x="368" y="204" width="12" height="9" fill="#a8b0b8" stroke="#3a3a3a" stroke-width="1"/>
  <path d="M382,210 V220 H370 M382,210 L380.5,212 M382,210 L383.5,212 M370,220 L372,218.5 M370,220 L372,221.5 M373,219 L380,213" fill="none" stroke="#3a3a3a" stroke-width="0.9"/>
</svg>
<!-- LAYOUT TABS -->
<div class="a" style="left:0;top:909px;width:1680px;height:18px;background:#ebe8d8"></div>
<div class="a" style="left:0;top:909px;width:1680px;height:1px;background:#7c7a6c"></div>
<div class="a" style="left:0;top:910px;width:1680px;height:1px;background:#f6f4ea"></div>
<div class="a" style="left:0;top:925px;width:1680px;height:1px;background:#f4f2e8"></div>
<div class="a" style="left:0;top:926px;width:1680px;height:1px;background:#ffffff"></div>
<div class="a" style="left:0;top:152px;width:1px;height:757px;background:#b0ac9c"></div>
<div class="a" style="left:1px;top:152px;width:1px;height:757px;background:#7e7a6c"></div>
<div class="a" style="left:1678px;top:152px;width:1px;height:757px;background:#f2f0e6"></div>
<div class="a" style="left:1679px;top:152px;width:1px;height:757px;background:#ffffff"></div>
<svg class="a" style="left:0;top:909px" width="220" height="17" viewBox="0 0 220 17">
  <g fill="#ece9d8" stroke="#c8c4b4" stroke-width="1">
    <rect x="2.5" y="1.5" width="13" height="14"/><rect x="17.5" y="1.5" width="13" height="14"/><rect x="32.5" y="1.5" width="13" height="14"/><rect x="47.5" y="1.5" width="13" height="14"/>
  </g>
  <g fill="#aca899">
    <rect x="5" y="5" width="1.5" height="8"/><path d="M12,5 V13 L7,9 Z"/>
    <path d="M27,5 V13 L22,9 Z"/>
    <path d="M37,5 V13 L42,9 Z"/>
    <path d="M51,5 V13 L56,9 Z"/><rect x="56.5" y="5" width="1.5" height="8"/>
  </g>
  <path d="M62.5,0 H115.5 L110,15.5 H67.5 Z" fill="#000"/>
  <path d="M115.5,0.5 L110.5,15.5 H155.5 L161,0.5" fill="none" stroke="#7a7868" stroke-width="1"/>
  <path d="M155.5,15.5 H197.5 L203,0.5" fill="none" stroke="#7a7868" stroke-width="1"/>
  <text x="74" y="12.5" font-family="Liberation Sans" font-size="11" fill="#fff">Model</text>
  <text x="120" y="12.5" font-family="Liberation Sans" font-size="11" fill="#000">24x36</text>
  <text x="166" y="12.5" font-family="Liberation Sans" font-size="11" fill="#000">8X11</text>
</svg>
<!-- COMMAND WINDOW -->
<div class="a" style="left:0;top:927px;width:1680px;height:4px;background:#636363"></div>
<div class="a" style="left:0;top:931px;width:1680px;height:67px;background:#a4a4a4"></div>
<div class="a" style="left:1px;top:931px;width:13px;height:1px;background:#b8b8b8"></div>
<div class="a" style="left:15px;top:931px;width:1648px;height:67px;background:#fff"></div>
<div class="a" style="left:16px;top:979px;width:1647px;height:1px;background:#aca899"></div>
<svg class="a" style="left:2px;top:934px" width="13" height="5"><g fill="#101010"><rect x="0" y="0" width="1" height="1"/><rect x="0" y="2" width="1" height="1"/><rect x="2" y="0" width="1" height="1"/><rect x="2" y="2" width="1" height="1"/><rect x="4" y="0" width="1" height="1"/><rect x="4" y="2" width="1" height="1"/><rect x="6" y="0" width="1" height="1"/><rect x="6" y="2" width="1" height="1"/><rect x="8" y="0" width="1" height="1"/><rect x="8" y="2" width="1" height="1"/><rect x="10" y="0" width="1" height="1"/><rect x="10" y="2" width="1" height="1"/></g><g fill="#d8d8d8"><rect x="1" y="1" width="1" height="1"/><rect x="1" y="3" width="1" height="1"/><rect x="3" y="1" width="1" height="1"/><rect x="3" y="3" width="1" height="1"/><rect x="5" y="1" width="1" height="1"/><rect x="5" y="3" width="1" height="1"/><rect x="7" y="1" width="1" height="1"/><rect x="7" y="3" width="1" height="1"/><rect x="9" y="1" width="1" height="1"/><rect x="9" y="3" width="1" height="1"/><rect x="11" y="1" width="1" height="1"/><rect x="11" y="3" width="1" height="1"/></g></svg>
<div class="a cl" style="top:933px">Command:  Regenerating model.</div>
<div class="a cl" style="top:949px">Command:  Regenerating model.</div>
<div class="a cl" style="top:965px">Command:  Regenerating model.</div>
<div class="a cl" style="top:984px">Command:</div>
<!-- vertical scrollbar -->
<div class="a" style="left:1663px;top:931px;width:17px;height:48px;background:linear-gradient(90deg,#f4f3ee,#fdfdfb)"></div>
<svg class="a" style="left:1663px;top:931px" width="17" height="67" viewBox="0 0 17 67">
  <rect x="1.5" y="0.5" width="14" height="16" rx="2" fill="#c6d4f8" stroke="#b4c8f4"/>
  <path d="M5,10 L8.5,6.5 L12,10" fill="none" stroke="#4d6185" stroke-width="2"/>
  <rect x="1.5" y="31.5" width="14" height="16" rx="2" fill="#c6d4f8" stroke="#b4c8f4"/>
  <path d="M5,37 L8.5,40.5 L12,37" fill="none" stroke="#4d6185" stroke-width="2"/>
  <rect x="0" y="49" width="17" height="18" fill="#ece9d8"/>
</svg>
<!-- horizontal scrollbar -->
<svg class="a" style="left:1596px;top:980px" width="67" height="18" viewBox="0 0 67 18">
  <rect x="0" y="0" width="67" height="18" fill="#f8f7f2"/>
  <rect x="1.5" y="1.5" width="15" height="15" rx="2" fill="#c6d4f8" stroke="#b4c8f4"/>
  <path d="M11,5 L7.5,9 L11,13" fill="none" stroke="#4d6185" stroke-width="2"/>
  <rect x="18.5" y="1.5" width="15" height="15" rx="2" fill="#c6d4f8" stroke="#b4c8f4"/>
  <path d="M23,6 V12 M25,6 V12 M27,6 V12 M29,6 V12" stroke="#f0f4ff" stroke-width="1"/>
  <rect x="49.5" y="1.5" width="15" height="15" rx="2" fill="#c6d4f8" stroke="#b4c8f4"/>
  <path d="M55,5 L58.5,9 L55,13" fill="none" stroke="#4d6185" stroke-width="2"/>
</svg>
<!-- STATUS BAR -->
<div class="a" style="left:0;top:998px;width:1680px;height:22px;background:linear-gradient(#a6a6a6,#989898 50%,#8a8a8a);border-top:1px solid #3a3a3a"></div>
<div class="a" style="left:12px;top:1003px;color:#1a1a1a;font-size:11.5px;white-space:pre;letter-spacing:0px">0'-5 21/32'', 0'-2 1/8''  , 0'-0''</div>
<svg class="a" style="left:0;top:999px" width="1680" height="21" viewBox="0 999 1680 21">
  <defs>
    <linearGradient id="sb" x1="0" y1="0" x2="0" y2="1"><stop offset="0" stop-color="#d0d0d0"/><stop offset="1" stop-color="#b8b8b8"/></linearGradient>
    <linearGradient id="sba" x1="0" y1="0" x2="0" y2="1"><stop offset="0" stop-color="#c8e4f0"/><stop offset="1" stop-color="#9ccfe0"/></linearGradient>
  </defs>
  <g stroke="#6a6a6a" stroke-width="1">
    <rect x="171.5" y="999.5" width="21" height="20" fill="url(#sb)"/>
    <rect x="193.5" y="999.5" width="21" height="20" fill="url(#sb)"/>
    <rect x="215.5" y="999.5" width="21" height="20" fill="url(#sba)"/>
    <rect x="237.5" y="999.5" width="21" height="20" fill="url(#sb)"/>
    <rect x="259.5" y="999.5" width="21" height="20" fill="url(#sba)"/>
    <rect x="281.5" y="999.5" width="21" height="20" fill="url(#sb)"/>
    <rect x="303.5" y="999.5" width="21" height="20" fill="url(#sb)"/>
    <rect x="325.5" y="999.5" width="21" height="20" fill="url(#sb)"/>
    <rect x="347.5" y="999.5" width="21" height="20" fill="url(#sb)"/>
    <rect x="369.5" y="999.5" width="21" height="20" fill="url(#sb)"/>
  </g>
  <g fill="none" stroke="#1a1a1a" stroke-width="1">
    <path d="M177,1004 h1 m2,0 h1 m2,0 h1 m2,0 h1 M177,1007 h1 m2,0 h1 m2,0 h1 M177,1010 h1 m2,0 h1 m2,0 h1 M186,1007 V1014 M177,1014.5 H185"/>
    <path d="M197.5,1003.5 H211.5 V1016.5 H197.5 Z M197.5,1006.5 H211.5 M197.5,1010 H211.5 M197.5,1013.5 H211.5 M201,1003.5 V1016.5 M204.5,1003.5 V1016.5 M208,1003.5 V1016.5" stroke-width="1.2"/>
    <path d="M220.5,1002 V1016.5 H234 M220.5,1010.5 H225.5 V1016.5" stroke="#2a2a2a"/>
    <path d="M250,1006.5 A4.5,4.5 0 1 0 251,1011" stroke="#4a4a4a" stroke-width="1.4"/><path d="M248,1010 L254,1004 M248,1010 H256" stroke="#1a1a1a" stroke-width="1.1"/>
    <rect x="264.5" y="1003.5" width="13" height="13" fill="#f4f4f4" stroke="#2a2a2a" stroke-width="1.2"/>
    <path d="M286,1016 L296,1007 M286,1016 H296" stroke="#2a2a2a"/>
    <path d="M307.5,1002 V1016.5 H321 M308,1016 L316,1008" stroke="#2a2a2a"/>
    <path d="M331,1009 H338 M334.5,1005.5 V1012.5" stroke-width="1.8"/>
    <rect x="337" y="1010" width="6" height="3" stroke-width="1"/>
    <path d="M352,1009 H364 M358,1003 V1015" stroke-width="2"/>
    <rect x="375.5" y="1004.5" width="9" height="11" fill="#fff" stroke-width="1.2"/>
    <path d="M377,1007 H383 M377,1009.5 H383 M377,1012 H383" stroke-width="0.8"/>
  </g>
  <circle cx="263" cy="1002.5" r="1.8" fill="#fff" stroke="#e04010" stroke-width="1"/>
  <path d="M315,1003 L319,1008 L317,1008.5 L320,1012" stroke="#f0a020" stroke-width="1.4" fill="none"/>
  <!-- right side -->
  <rect x="1190" y="999" width="8" height="21" fill="#888"/>
  <g stroke="#6a6a6a" stroke-width="1">
    <rect x="1197.5" y="999.5" width="21" height="20" fill="url(#sb)"/>
    <rect x="1219.5" y="999.5" width="21" height="20" fill="url(#sb)"/>
    <rect x="1241.5" y="999.5" width="12" height="20" fill="#8a8a8a"/>
    <rect x="1253.5" y="999.5" width="21" height="20" fill="url(#sb)"/>
    <rect x="1275.5" y="999.5" width="21" height="20" fill="url(#sb)"/>
    <rect x="1297.5" y="999.5" width="21" height="20" fill="url(#sb)"/>
    <rect x="1319.5" y="999.5" width="21" height="20" fill="url(#sb)"/>
    <rect x="1341.5" y="999.5" width="11" height="20" fill="#8a8a8a"/>
    <rect x="1352.5" y="999.5" width="92" height="20" fill="url(#sb)"/>
    <rect x="1444.5" y="999.5" width="21" height="20" fill="url(#sb)"/>
    <rect x="1466.5" y="999.5" width="21" height="20" fill="url(#sb)"/>
    <rect x="1487.5" y="999.5" width="7" height="20" fill="#8a8a8a"/>
    <rect x="1494.5" y="999.5" width="96" height="20" fill="url(#sb)"/>
    <rect x="1591.5" y="999.5" width="21" height="20" fill="url(#sb)"/>
    <rect x="1613.5" y="999.5" width="32" height="20" fill="#9a9a9a"/>
    <rect x="1645.5" y="999.5" width="12" height="20" fill="url(#sb)"/>
    <rect x="1657.5" y="999.5" width="22" height="20" fill="url(#sb)"/>
  </g>
  <g fill="none" stroke="#1a1a1a" stroke-width="1">
    <rect x="1201.5" y="1002.5" width="12" height="11" fill="#fafafa"/>
    <path d="M1204,1011 V1005 L1208,1011 Z M1200,1016.5 H1216" stroke-width="1.2"/>
    <rect x="1223.5" y="1002.5" width="6" height="7" fill="#f0f0f0"/><rect x="1231.5" y="1002.5" width="6" height="7" fill="#f0f0f0"/>
    <path d="M1223,1013.5 H1238" stroke-width="2"/>
    <path d="M1258,1006 Q1258,1016 1266,1016 Q1270,1012 1268,1007 L1262,1005 Z" fill="#e8e8e8"/>
    <path d="M1269,1002 V1009 M1265.5,1005.5 H1272.5" stroke-width="1.2"/>
    <circle cx="1284" cy="1007" r="4.5" fill="#e4f0f8" stroke-width="1.2"/>
    <path d="M1287,1010.5 L1292,1015.5" stroke-width="2"/>
    <circle cx="1308" cy="1009" r="6.5" fill="#d8d8d8" stroke="#3a3a3a"/>
    <path d="M1303.5,1004.5 L1312.5,1013.5 M1312.5,1004.5 L1303.5,1013.5" stroke="#3a3a3a"/>
    <rect x="1323.5" y="1003" width="3" height="2.5" fill="#1a1a1a"/><rect x="1328" y="1003" width="3" height="2.5" fill="#1a1a1a"/><rect x="1332.5" y="1003" width="3" height="2.5" fill="#1a1a1a"/>
    <rect x="1323.5" y="1007.5" width="12" height="9" fill="#f0f0f0"/>
    <path d="M1328,1009.5 L1332,1012 L1328,1014.5 Z" fill="#1a1a1a"/>
    <path d="M1362,1003 L1364,1011 L1370,1015 L1363,1013 L1357,1016 L1361,1010 Z" fill="#f0f0f0" stroke-width="1.2"/>
  </g>
  <text x="1372" y="1013.5" font-family="Liberation Sans" font-size="11.5" fill="#1a1a1a" textLength="60" lengthAdjust="spacingAndGlyphs">1/8'' = 1'-0''</text>
  <path d="M1433,1006 H1440 L1436.5,1010 Z" fill="#1a1a1a"/>
  <g fill="#f0f0f0" stroke="#2a2a2a" stroke-width="1">
    <path d="M1455,1003 L1457,1011 L1462,1015 L1456,1013 L1450,1016 L1454,1010 Z"/>
  </g>
  <circle cx="1461" cy="1011" r="2.5" fill="#f8c020" stroke="#c07010" stroke-width="0.6"/>
  <path d="M1477,1003 L1479,1011 L1484,1015 L1478,1013 L1472,1016 L1476,1010 Z" fill="#c8c8c8" stroke="#909090" stroke-width="1"/>
  <g transform="translate(1506,1009)"><circle r="5.5" fill="none" stroke="#2a2a2a" stroke-width="2.4" stroke-dasharray="2,1.5"/><circle r="5" fill="#e8e8e8" stroke="#2a2a2a" stroke-width="0.8"/><circle r="2" fill="#b8b8b8" stroke="#2a2a2a" stroke-width="1"/></g>
  <text x="1516" y="1013.5" font-family="Liberation Sans" font-size="11.5" fill="#1a1a1a" textLength="61" lengthAdjust="spacingAndGlyphs">3D Modeling</text>
  <path d="M1578,1006 H1586 L1582,1010 Z" fill="#1a1a1a"/>
  <rect x="1595.5" y="1008.5" width="8" height="7" fill="#f0f0f0" stroke="#1a1a1a" stroke-width="1.2"/>
  <path d="M1601,1008 V1005 Q1601,1002 1605,1002 Q1609,1002 1609,1005 V1007" fill="none" stroke="#1a1a1a" stroke-width="1.4"/>
  <rect x="1616" y="1002" width="24" height="17" fill="#7a7a7a"/>
  <rect x="1619" y="1003" width="9" height="6" fill="#3a70b0"/>
  <path d="M1619,1010 H1633 V1016 H1619 Z" fill="#f0d040"/>
  <path d="M1625,1013 L1628,1016 L1635,1009" stroke="#20a020" stroke-width="2" fill="none"/>
  <path d="M1648,1007 H1655 L1651.5,1011 Z" fill="#1a1a1a"/>
  <rect x="1661.5" y="1002.5" width="14" height="14" fill="#f4f4f4" stroke="#1a1a1a" stroke-width="1.2"/>
  <rect x="1662" y="1003" width="13" height="2.5" fill="#1a1a1a"/>
</svg>
<!-- TASKBAR -->
<div class="a" style="left:0;top:1020px;width:1680px;height:30px;background:linear-gradient(#2a62d8 0 1px,#3a86ea 1px 2px,#4c92ea 2px 3px,#3472e2 3px 4px,#2458d8 4px 6px,#2256d8 6px 12px,#2562e2 28px,#1c48b0 29px)"></div>
<div class="a" style="left:0;top:1020px;width:97px;height:30px;background:linear-gradient(#5bb55b,#3c9c3c 25%,#34923a 70%,#2c7e30);border-radius:0 8px 8px 0 / 0 15px 15px 0;box-shadow:inset -2px 0 3px rgba(0,0,0,0.35)"></div>
<svg class="a" style="left:10px;top:1026px" width="20" height="19" viewBox="0 0 20 19">
  <path d="M2,3 Q5,1 9,2.5 L8,8.5 Q4,7 1,8.5 Z" fill="#f05a20"/>
  <path d="M10,3 Q14,4.5 18,3 L17,9 Q13,10.5 9,9 Z" fill="#6ac030"/>
  <path d="M1,9.5 Q4,8 8,9.5 L7,15.5 Q3.5,14 0,15.5 Z" fill="#2a80e8"/>
  <path d="M9,10 Q13,11.5 17,10 L16,16 Q12,17.5 8,16 Z" fill="#f8c818"/>
</svg>
<div class="a" style="left:34px;top:1024px;color:#fff;font-size:17px;font-weight:bold;font-style:italic;text-shadow:1px 1px 1px #1a4a1a">start</div>
<div class="a tb" style="left:107px">Inbox - Microsoft Out...</div>
<div class="a tb" style="left:267px">RevitCity.com | Foru...</div>
<div class="a tb" style="left:427px">Facebook - Google C...</div>
<div class="a tb" style="left:587px">Autodesk Revit Archit...</div>
<div class="a tb act" style="left:747px">AutoCAD 2010 - [3fo...</div>
<div class="a tb" style="left:907px">Revit 7th Fl</div>
<div class="a tb" style="left:1067px">Untitled-1 @ 66.7% (...</div>
<svg class="a" style="left:0;top:1020px" width="1240" height="30" viewBox="0 1020 1240 30">
  <defs><radialGradient id="chr" cx="0.5" cy="0.5" r="0.5"><stop offset="0.35" stop-color="#4a90e0"/><stop offset="0.42" stop-color="#fff"/><stop offset="0.5" stop-color="#fff"/></radialGradient></defs>
  <!-- outlook -->
  <rect x="116.5" y="1026.5" width="12" height="14" rx="2" fill="#fde8c8" stroke="#f08a20" stroke-width="1"/>
  <circle cx="124.5" cy="1036" r="6" fill="#fce29a" stroke="#e8a030" stroke-width="0.8"/>
  <path d="M121.5,1034.5 L124.5,1037.5 L127.5,1034.5" fill="none" stroke="#a06010" stroke-width="1.1"/>
  <!-- chrome icons -->
  <g transform="translate(284,1035)"><circle r="7" fill="#d83a2a"/><path d="M0,0 L-6.1,3.5 A7,7 0 0 0 3.5,6.1 Z" fill="#2a9a3a"/><path d="M0,0 L6.1,-3.5 A7,7 0 0 1 3.5,6.1 Z" fill="#f8c820"/><circle r="3.2" fill="#fff"/><circle r="2.4" fill="#3a80e0"/></g>
  <g transform="translate(444,1035)"><circle r="7" fill="#d83a2a"/><path d="M0,0 L-6.1,3.5 A7,7 0 0 0 3.5,6.1 Z" fill="#2a9a3a"/><path d="M0,0 L6.1,-3.5 A7,7 0 0 1 3.5,6.1 Z" fill="#f8c820"/><circle r="3.2" fill="#fff"/><circle r="2.4" fill="#3a80e0"/></g>
  <!-- revit -->
  <rect x="596" y="1030" width="15" height="12" fill="#2a2a2a" stroke="#ddd" stroke-width="0.5"/>
  <rect x="604" y="1036" width="7" height="7" fill="#fff" stroke="#222" stroke-width="0.6"/>
  <text x="597" y="1036" font-family="Liberation Sans" font-weight="bold" font-size="9" fill="#b03aa0">R</text>
  <text x="605.5" y="1042" font-family="Liberation Sans" font-weight="bold" font-size="6" fill="#111">A</text>
  <!-- autocad -->
  <rect x="756.5" y="1028.5" width="14" height="14" fill="#f0f0f0" stroke="#999" stroke-width="0.6"/>
  <text x="757" y="1036" font-family="Liberation Sans" font-weight="bold" font-size="9" fill="#d01010">A</text>
  <text x="763" y="1035" font-family="Liberation Sans" font-weight="bold" font-size="5.5" fill="#d01010">10</text>
  <!-- folder -->
  <path d="M916.5,1030.5 H921 L922.5,1032 H929.5 V1041.5 H916.5 Z" fill="#f8d878" stroke="#b88a20" stroke-width="0.8"/>
  <path d="M916.5,1041.5 L918.5,1034.5 H931 L929.5,1041.5 Z" fill="#fce898" stroke="#b88a20" stroke-width="0.8"/>
  <!-- photoshop -->
  <rect x="1076" y="1028" width="15" height="15" fill="#0a3a6a" stroke="#1a5a9a" stroke-width="0.6"/>
  <text x="1078" y="1039" font-family="Liberation Sans" font-weight="bold" font-size="8" fill="#7ac8f8">Ps</text>
</svg>
<!-- tray -->
<div class="a" style="left:1551px;top:1020px;width:129px;height:30px;background:linear-gradient(#3ab4f8,#0f9ae6 12%,#0e94e4 85%,#0a78c8);border-left:1px solid #0d4aa8;box-shadow:inset 1px 0 1px #6ad0ff"></div>
<div class="a" style="left:1478px;top:1027px;width:16px;height:16px;background:#3a6ad0"></div>
<div class="a" style="left:1479px;top:1029px;color:#fff;font-size:11px">EN</div>
<svg class="a" style="left:1498px;top:1022px" width="182" height="28" viewBox="1498 1022 182 28">
  <path d="M1501.5,1028.5 H1514.5 V1039.5 H1510 L1507,1042 V1039.5 H1501.5 Z" fill="#fcf040" stroke="#111" stroke-width="1"/>
  <text x="1504.5" y="1038.5" font-family="Liberation Sans" font-weight="bold" font-size="10" fill="#1a1a8a">?</text>
  <rect x="1527" y="1027.5" width="7" height="4" fill="none" stroke="#fff" stroke-width="1"/>
  <rect x="1525" y="1029.5" width="7" height="4" fill="#2a5ad8" stroke="#fff" stroke-width="1"/>
  <path d="M1527,1039 H1532 L1529.5,1042 Z" fill="#fff"/>
  <circle cx="1551.5" cy="1035" r="8.7" fill="#1a70e0" stroke="#0a3a8a" stroke-width="0.8"/>
  <circle cx="1551.5" cy="1035" r="7.5" fill="#3890f0"/>
  <path d="M1553.5,1031 L1549.5,1035 L1553.5,1039" fill="none" stroke="#fff" stroke-width="2.2"/>
  <rect x="1562.5" y="1027.5" width="13" height="13" rx="2" fill="#fde0b8" stroke="#f08a20" stroke-width="1"/>
  <circle cx="1570" cy="1036.5" r="5.5" fill="#fce29a" stroke="#e8a030" stroke-width="0.8"/>
  <path d="M1567.5,1035 L1570,1037.5 L1572.5,1035" fill="none" stroke="#a06010" stroke-width="1"/>
  <rect x="1580.5" y="1028.5" width="14" height="12" fill="#e8eef8" stroke="#6a7a9a" stroke-width="0.8"/>
  <rect x="1580.5" y="1028.5" width="14" height="3" fill="#3a7ae0"/>
  <circle cx="1590" cy="1035" r="1.8" fill="#e02020"/>
  <circle cx="1604" cy="1034" r="5" fill="#505a64" stroke="#2a2a2a" stroke-width="0.6"/>
  <circle cx="1603" cy="1033" r="2" fill="#b8c0c8"/>
  <path d="M1607,1041 L1613,1037" stroke="#a0a8f8" stroke-width="0.8"/>
  <text x="1621" y="1039.5" font-family="Liberation Sans" font-size="11" fill="#fff">11:04 PM</text>
</svg>
</body></html>
